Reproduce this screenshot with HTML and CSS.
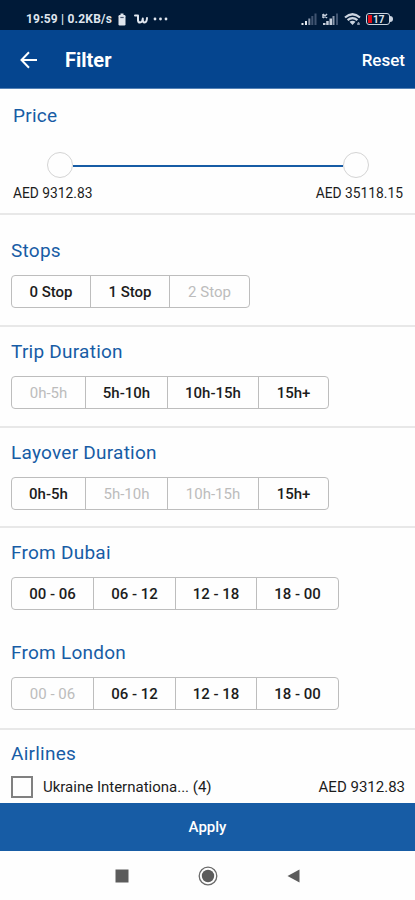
FILE: index.html
```
<!DOCTYPE html>
<html lang="en">
<head>
    <meta charset="UTF-8">
    <meta name="viewport" content="width=device-width, initial-scale=1.0">
    <title>Filter</title>
    <link rel="stylesheet" href="styles.css">
</head>
<body>
    <div class="status-bar">
        <div class="status-left">
            <span class="status-text">19:59 | 0.2KB/s</span>
            <svg class="status-battery-small" width="8" height="13" viewBox="0 0 8 13">
                <path d="M2.5 0.5h3v1.5h-3z" fill="#dfe5ee"/>
                <rect x="0.5" y="2" width="7" height="10.5" rx="1.2" fill="#dfe5ee"/>
                <path d="M2.3 4.5h3.4" stroke="#4a5a74" stroke-width="1.2"/>
            </svg>
            <svg class="status-app" width="14" height="10" viewBox="0 0 14 10" fill="none" stroke="#dfe5ee" stroke-width="2" stroke-linecap="round" stroke-linejoin="round">
                <path d="M1 1.5h3v5Q4.300 8.500 6 8.500Q8.500 8.500 8.800 4.500Q8.600 8.500 10.600 8.500Q12.800 8.300 13 4"/>
            </svg>
            <svg width="15" height="4" viewBox="0 0 15 4" fill="#dfe5ee">
                <circle cx="2" cy="2" r="1.400"/>
                <circle cx="7.500" cy="2" r="1.400"/>
                <circle cx="13" cy="2" r="1.400"/>
            </svg>
        </div>
        <div class="status-right">
            <svg width="16" height="13" viewBox="0 0 16 13">
                <path d="M0.500 10h2v2h-2zM4 8h2v4h-2z" fill="#e6ebf2"/>
                <path d="M7.300 5.500h2v6.500h-2z" fill="#8c9aae"/>
                <path d="M10.300 3h2v9h-2zM13.500 0.500h2v11.500h-2z" fill="#405471"/>
            </svg>
            <svg width="17" height="13" viewBox="0 0 17 13">
                <path d="M1 1l4 4M5 1l-4 4M1 1v4" stroke="#c5cedb" stroke-width="1.500" fill="none"/>
                <path d="M1 10h2.500v2h-2.500zM4.200 8h2.500v4h-2.500zM7.500 5.500h2.500v6.500h-2.500z" fill="#c5cedb"/>
                <path d="M10.500 3h2v9h-2z" fill="#8c9aae"/>
                <path d="M14 0.500h2v11.500h-2z" fill="#405471"/>
            </svg>
            <svg width="17" height="13" viewBox="0 0 17 13" fill="none" stroke="#cbd4e0" stroke-width="2.200">
                <path d="M1 4.500Q8.500-2 16 4.500"/>
                <path d="M3.600 7.200Q8.500 3 13.400 7.200"/>
                <path d="M5.500 8.800Q8.500 6.600 11.500 8.800L8.500 12z" fill="#cbd4e0" stroke="none"/>
                <path d="M13 11h3M14.500 9v3" stroke="#8c9aae" stroke-width="1.400"/>
            </svg>
            <div class="battery">
                <div class="battery-body"><span class="battery-level"></span>17</div>
                <span class="battery-tip"></span>
            </div>
        </div>
    </div>

    <header class="header">
        <svg class="back" width="18" height="18" viewBox="0 0 18 18" fill="none" stroke="#ffffff" stroke-width="2">
            <path d="M17 9H2M9 1.300L1.500 9L9 16.700"/>
        </svg>
        <h1>Filter</h1>
        <span class="reset">Reset</span>
    </header>

    <main class="filters">
        <section class="section price">
            <h2>Price</h2>
            <div class="slider">
                <span class="thumb"></span>
                <span class="track"></span>
                <span class="thumb"></span>
            </div>
            <div class="price-values">
                <span>AED 9312.83</span>
                <span>AED 35118.15</span>
            </div>
        </section>

        <section class="section stops">
            <h2>Stops</h2>
            <div class="segments">
                <span class="segment">0 Stop</span>
                <span class="segment">1 Stop</span>
                <span class="segment disabled">2 Stop</span>
            </div>
        </section>

        <section class="section">
            <h2>Trip Duration</h2>
            <div class="segments durations">
                <span class="segment disabled">0h-5h</span>
                <span class="segment">5h-10h</span>
                <span class="segment">10h-15h</span>
                <span class="segment">15h+</span>
            </div>
        </section>

        <section class="section layover">
            <h2>Layover Duration</h2>
            <div class="segments durations">
                <span class="segment">0h-5h</span>
                <span class="segment disabled">5h-10h</span>
                <span class="segment disabled">10h-15h</span>
                <span class="segment">15h+</span>
            </div>
        </section>

        <section class="section times">
            <h2>From Dubai</h2>
            <div class="segments">
                <span class="segment">00 - 06</span>
                <span class="segment">06 - 12</span>
                <span class="segment">12 - 18</span>
                <span class="segment">18 - 00</span>
            </div>
            <h2>From London</h2>
            <div class="segments">
                <span class="segment disabled">00 - 06</span>
                <span class="segment">06 - 12</span>
                <span class="segment">12 - 18</span>
                <span class="segment">18 - 00</span>
            </div>
        </section>

        <section class="section airlines">
            <h2>Airlines</h2>
            <div class="airline">
                <span class="checkbox"></span>
                <span class="airline-name">Ukraine Internationa... (4)</span>
                <span class="airline-price">AED 9312.83</span>
            </div>
        </section>
    </main>

    <div class="apply">Apply</div>

    <nav class="nav-bar">
        <svg width="14" height="14" viewBox="0 0 14 14"><rect x="0.500" y="0.500" width="13" height="13" fill="#5c5c5c"/></svg>
        <svg width="20" height="20" viewBox="0 0 20 20">
            <circle cx="10" cy="10" r="8.800" fill="none" stroke="#6a6a6a" stroke-width="1.300"/>
            <circle cx="10" cy="10" r="6.200" fill="#5c5c5c"/>
        </svg>
        <svg width="13" height="14" viewBox="0 0 13 14"><path d="M12.500 0.500v13L0.500 7z" fill="#5c5c5c"/></svg>
    </nav>
</body>
</html>
```
FILE: styles.css
```
:root {
    --status: #001a38;
    --header: #05458f;
    --accent: #175ca5;
    --text: #1c1c1c;
    --muted: #bcbcbc;
    --line: #e8e8e8;
    --border: #bdbdbd;
}

* {
    margin: 0;
    padding: 0;
    box-sizing: border-box;
}

body {
    width: 415px;
    height: 900px;
    display: flex;
    flex-direction: column;
    overflow: hidden;
    background-color: #fefefe;
    color: var(--text);
    font-family: Roboto, sans-serif;
}

svg {
    display: block;
    flex: none;
}

/* Status bar */
.status-bar {
    height: 30px;
    padding: 8px 22px 0 26px;
    display: flex;
    justify-content: space-between;
    background-color: var(--status);
    color: #dfe5ee;
}

.status-left,
.status-right {
    height: 22px;
    display: flex;
    align-items: center;
}

.status-text {
    width: 92px;
    font-size: 12px;
    font-weight: 700;
    letter-spacing: 0.2px;
    white-space: nowrap;
}

.status-app {
    margin: 0 5px 0 8px;
}

.status-right {
    gap: 5px;
}

.battery {
    display: flex;
    align-items: center;
}

.battery-body {
    width: 24px;
    height: 12px;
    padding-left: 1px;
    display: flex;
    align-items: center;
    gap: 1px;
    border: 1.5px solid #cbd4e0;
    border-radius: 3px;
    font-size: 10px;
    font-weight: 700;
    line-height: 9px;
}

.battery-level {
    width: 4px;
    height: 8px;
    background-color: #e00b16;
}

.battery-tip {
    width: 3px;
    height: 6px;
    border-radius: 0 3px 3px 0;
    background-color: #cbd4e0;
}

/* Header */
.header {
    height: 59px;
    padding: 2px 10px 0 20px;
    display: flex;
    align-items: center;
    border-bottom: 1px solid #5582b6;
    background-color: var(--header);
    color: #ffffff;
}

.header h1 {
    margin-left: 27px;
    font-size: 20px;
    font-weight: 700;
}

.reset {
    margin-left: auto;
    font-size: 17px;
    font-weight: 500;
}

/* Filter sections */
.filters {
    height: 714px;
    overflow: hidden;
}

.section {
    height: 101px;
    padding: 14px 11px 0;
    border-bottom: 2px solid var(--line);
}

h2 {
    height: 22px;
    color: var(--accent);
    font-size: 19px;
    font-weight: 400;
    letter-spacing: 0.25px;
    line-height: 22px;
    white-space: nowrap;
}

.price {
    height: 126px;
    padding: 16px 12px 0 13px;
}

.slider {
    margin: 25px 34px 0;
    height: 26px;
    display: flex;
    align-items: center;
}

.thumb {
    width: 26px;
    height: 26px;
    border: 1px solid #d4d4d4;
    border-radius: 50%;
}

.track {
    flex: 1;
    height: 2px;
    margin-top: 2px;
    background-color: var(--accent);
}

.price-values {
    margin-top: 7px;
    display: flex;
    justify-content: space-between;
    font-size: 13.8px;
    line-height: 16px;
}

.stops {
    height: 112px;
    padding-top: 25px;
}

.layover {
    height: 100px;
}

.segments {
    width: max-content;
    height: 33px;
    margin-top: 13px;
    display: flex;
    border: 1px solid var(--border);
    border-radius: 4px;
}

.segment {
    width: 82px;
    display: flex;
    align-items: center;
    justify-content: center;
    border-right: 1px solid var(--border);
    font-size: 15px;
    font-weight: 500;
    white-space: nowrap;
}

.segment:last-child {
    border-right: none;
}

.stops .segment {
    width: 79px;
}

.durations .segment:nth-child(1) {
    width: 74px;
}

.durations .segment:nth-child(3) {
    width: 91px;
}

.durations .segment:nth-child(4) {
    width: 69px;
}

.segment.disabled {
    color: var(--muted);
    font-weight: 400;
}

.times {
    height: 202px;
}

.times .segment:nth-child(n + 3) {
    width: 81px;
}

.times .segments + h2 {
    margin-top: 32px;
}

.airlines {
    height: 80px;
    padding-top: 13px;
    padding-right: 10px;
    border-bottom: none;
}

.airline {
    margin-top: 11px;
    height: 22px;
    display: flex;
    align-items: center;
    font-size: 15px;
}

.checkbox {
    width: 22px;
    height: 22px;
    border: 2px solid #808080;
}

.airline-name {
    margin-left: 10px;
}

.airline-price {
    margin-left: auto;
}

/* Bottom */
.apply {
    height: 48px;
    display: flex;
    align-items: center;
    justify-content: center;
    background-color: var(--accent);
    color: #ffffff;
    font-size: 15px;
    font-weight: 500;
}

.nav-bar {
    height: 49px;
    padding: 0 115px;
    display: flex;
    align-items: center;
    justify-content: space-between;
}
```
